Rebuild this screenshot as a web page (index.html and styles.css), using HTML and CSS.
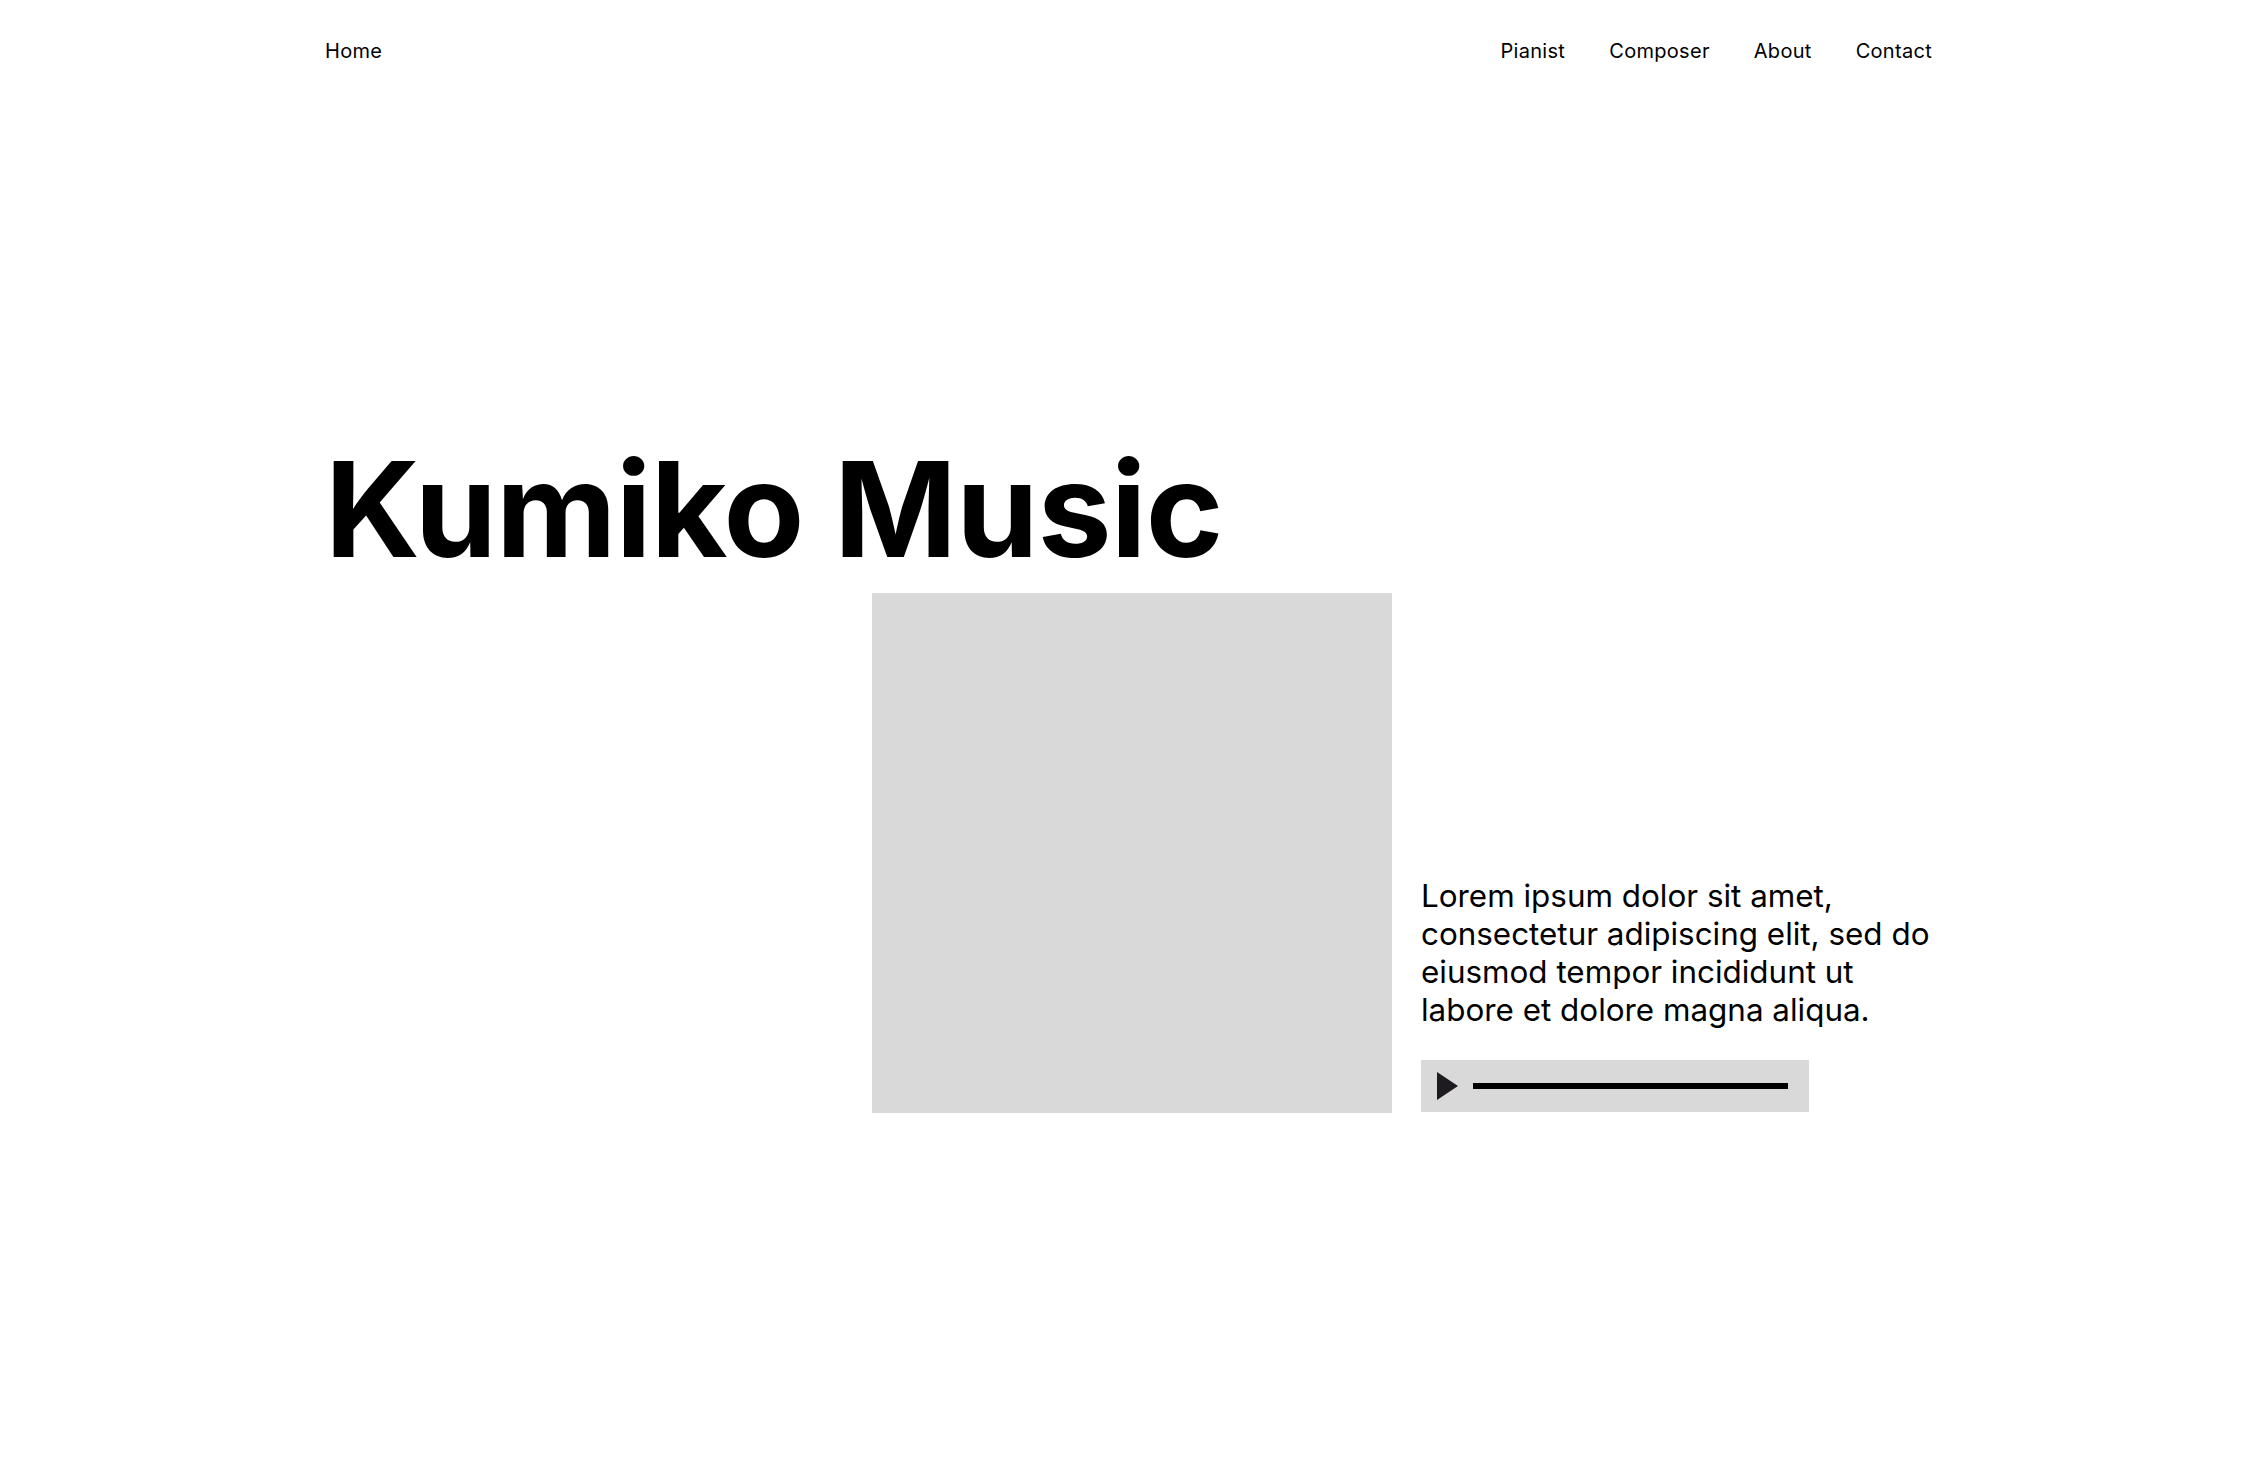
FILE: index.html
```html
<!DOCTYPE html>
<html lang="en">
<head>
<meta charset="utf-8">
<title>Kumiko Music</title>
<link rel="stylesheet" href="styles.css">
</head>
<body>
<div class="page">
  <header class="nav">
    <a class="nav-home" href="#">Home</a>
    <nav class="nav-links">
      <a href="#">Pianist</a>
      <a href="#">Composer</a>
      <a href="#">About</a>
      <a href="#">Contact</a>
    </nav>
  </header>
  <main class="hero">
    <h1 class="title">Kumiko Music</h1>
    <section class="feature">
      <div class="cover"></div>
      <div class="info">
        <p class="desc">Lorem ipsum dolor sit amet, consectetur adipiscing elit, sed do eiusmod tempor incididunt ut labore et dolore magna aliqua.</p>
        <div class="player">
          <svg class="play" width="21" height="28" viewBox="0 0 21 28"><path d="M0 0 L21 14 L0 28 Z" fill="#1d1b20"/></svg>
          <div class="track"></div>
        </div>
      </div>
    </section>
  </main>
</div>
</body>
</html>
```
FILE: styles.css
```css
html, body {
  margin: 0;
  padding: 0;
  background: #ffffff;
}
body {
  font-family: Inter, "Noto Sans", sans-serif;
  color: #000000;
}
.page {
  padding: 0 331px 0 325px;
}
.nav {
  display: flex;
  justify-content: space-between;
  align-items: center;
  padding-top: 39px;
  font-size: 20px;
  letter-spacing: 0.3px;
}
.nav a {
  color: #000000;
  text-decoration: none;
}
.nav-links {
  display: flex;
  gap: 44px;
}
.hero {
  padding-top: 380px;
}
.title {
  margin: 0;
  font-size: 132px;
  font-weight: 700;
  line-height: 132px;
  letter-spacing: -0.8px;
}
.feature {
  display: grid;
  grid-template-columns: 520px 1fr;
  column-gap: 29px;
  align-items: end;
  margin-top: 18px;
  margin-left: 547px;
}
.cover {
  width: 520px;
  height: 520px;
  background: #d9d9d9;
}
.info {
  display: flex;
  flex-direction: column;
  gap: 31px;
  padding-bottom: 1px;
}
.desc {
  margin: 0;
  font-size: 31.4px;
  line-height: 38px;
}
.player {
  display: flex;
  align-items: center;
  width: 388px;
  height: 52px;
  box-sizing: border-box;
  padding: 0 21px 0 16px;
  background: #d9d9d9;
}
.play {
  flex: none;
  display: block;
}
.track {
  flex: 1;
  height: 6px;
  margin-left: 15px;
  background: #000000;
}
```
